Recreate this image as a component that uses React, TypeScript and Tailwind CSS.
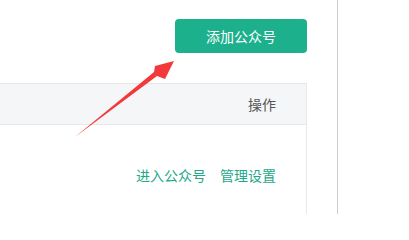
export default function App() {
  return (
    <div
      className="relative flex h-[214px] w-[409px] overflow-hidden bg-white"
      style={{ fontFamily: '"Noto Sans CJK SC", "Noto Sans", sans-serif' }}
    >
      <div className="flex h-full w-[338px] flex-col border-r border-[#cbcbcb]">
        <div className="flex justify-end pr-[30px] pt-[19px]">
          <button className="h-[34px] w-[132px] rounded-[4px] bg-[#1db08d] text-[14px] text-white">
            添加公众号
          </button>
        </div>

        <div className="mt-[30px] w-[307px] border-r border-[#e8e8e8]">
          <div className="flex h-[42px] items-center justify-end border-y border-[#e6e6e6] bg-[#f5f6f8] pr-[30px] text-[14px] text-[#555]">
            操作
          </div>
          <div className="flex h-[100px] items-center justify-end gap-[14px] pr-[30px] text-[14px] text-[#24a888]">
            <span>进入公众号</span>
            <span>管理设置</span>
          </div>
        </div>
      </div>

      {/* red arrow pointing at the button */}
      <svg className="pointer-events-none absolute left-0 top-0" width="409" height="214">
        <polygon
          points="75,137 157,76 165,79 174,61 155,66 154,72"
          fill="#f33a3a"
        />
      </svg>
    </div>
  );
}
